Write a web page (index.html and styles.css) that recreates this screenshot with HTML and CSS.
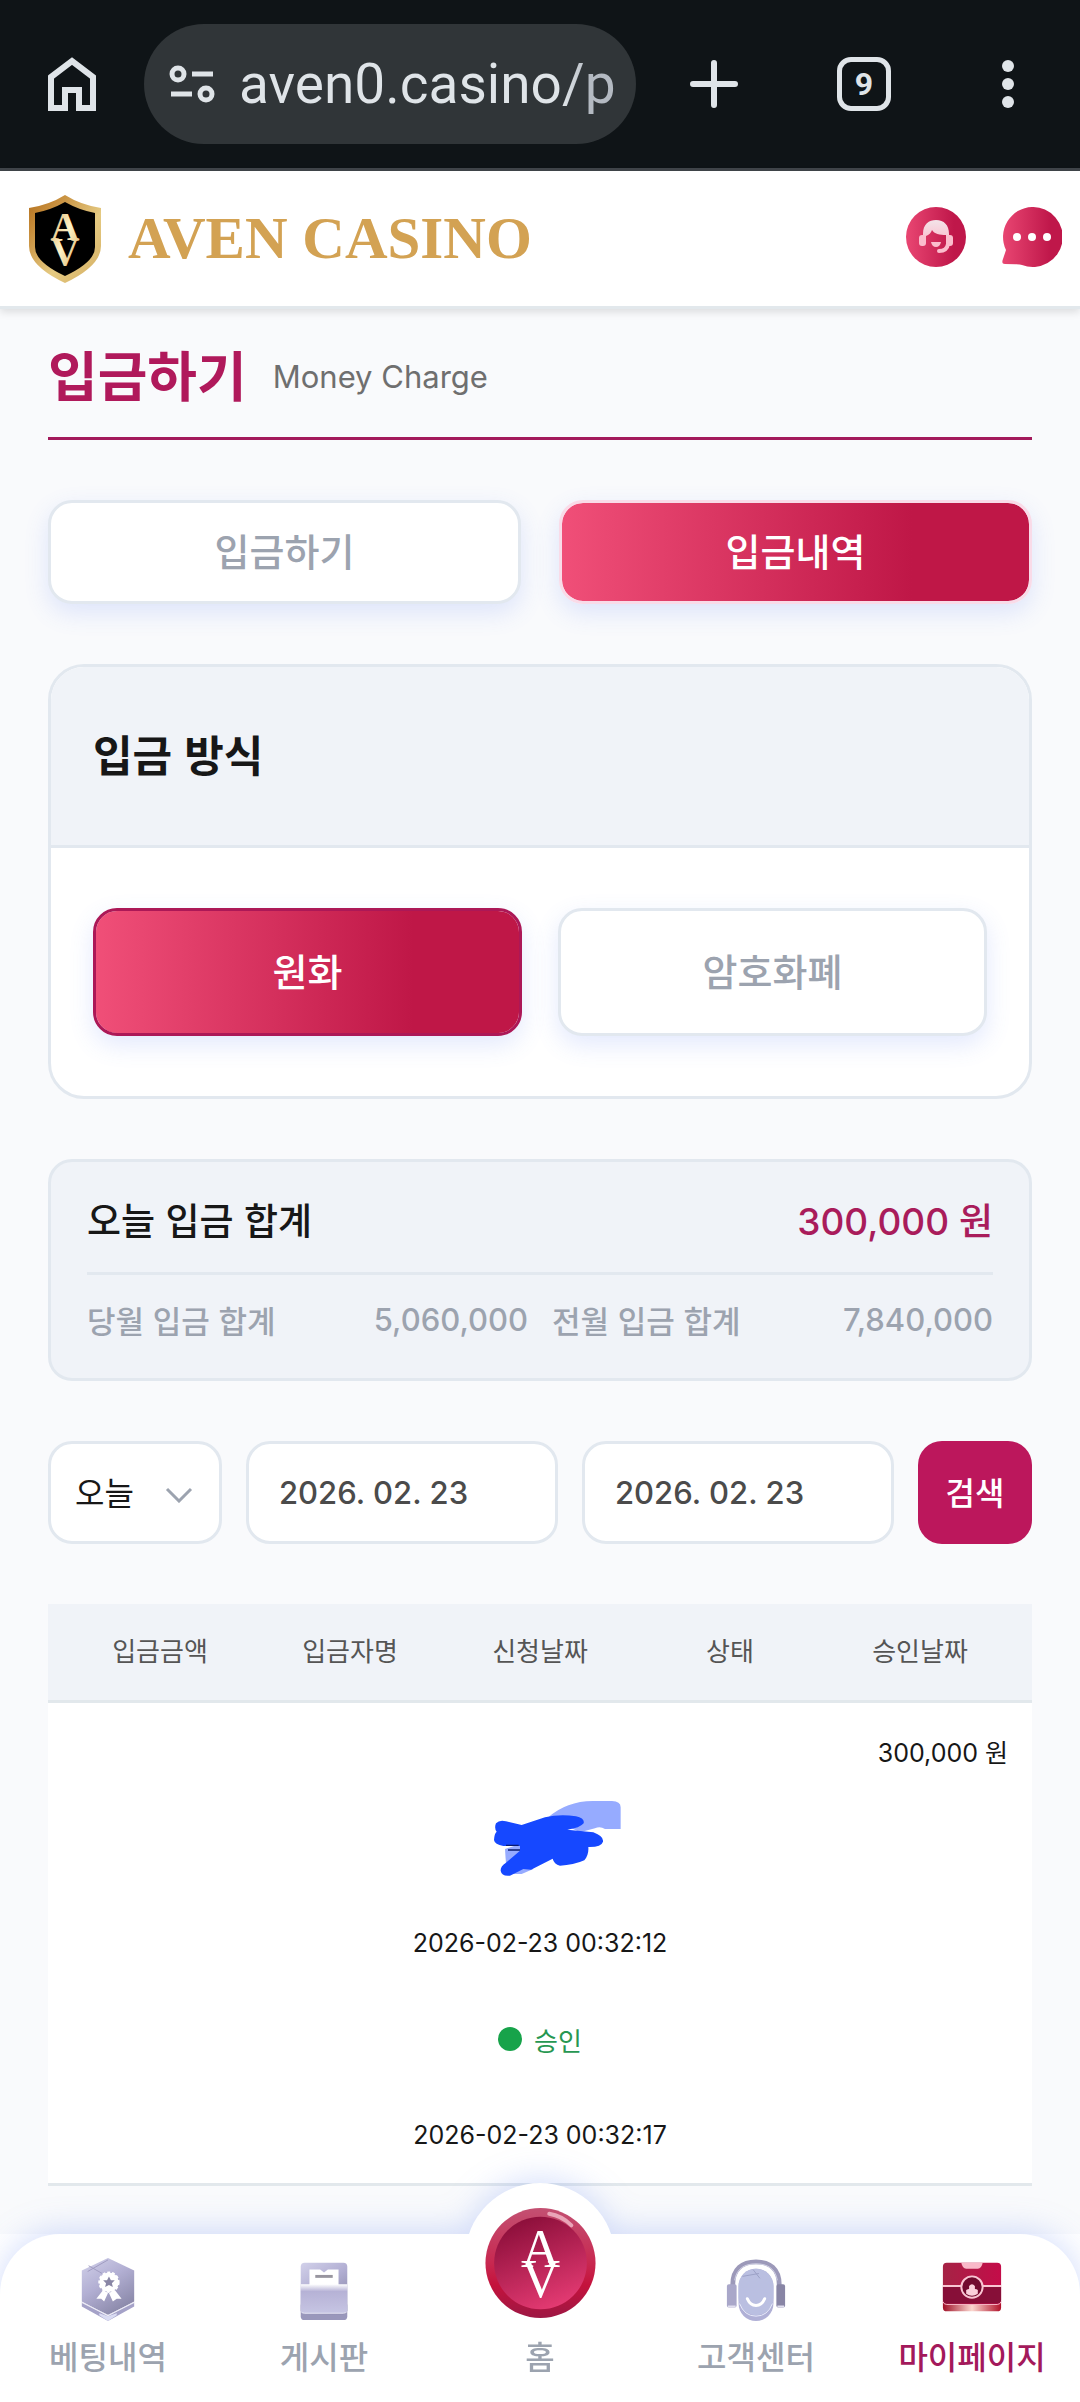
FILE: index.html
```html
<!DOCTYPE html>
<html lang="ko">

<head>
  <meta charset="UTF-8">
  <meta name="viewport" content="width=device-width, initial-scale=1.0">
  <title>AVEN CASINO</title>
  <link rel="stylesheet" href="styles.css">
</head>

<body>

  <!-- Browser bar -->
  <div class="browser">
    <button class="browser-btn" type="button" aria-label="Home">
      <svg width="48" height="54" viewBox="0 0 48 54">
        <path d="M3 20 L24 4 L45 20 V51 H31 V33 H17 V51 H3 Z" fill="none" stroke="#dfe4e8" stroke-width="6" />
      </svg>
    </button>
    <div class="address">
      <svg width="46" height="40" viewBox="0 0 46 40" fill="none" stroke="#dfe4e8" stroke-width="5">
        <circle cx="9" cy="10" r="6" />
        <path d="M23 10 H44 M2 30 H23" />
        <circle cx="37" cy="30" r="6" />
      </svg>
      <input class="address-input" type="text" value="aven0.casino/p" aria-label="URL">
    </div>
    <button class="browser-btn browser-plus" type="button" aria-label="New tab">
      <svg width="48" height="48" viewBox="0 0 48 48">
        <path d="M24 3 V45 M3 24 H45" stroke="#dfe4e8" stroke-width="6" stroke-linecap="round" />
      </svg>
    </button>
    <button class="browser-btn browser-tabs" type="button">9</button>
    <button class="browser-btn browser-menu" type="button" aria-label="Menu">
      <svg width="12" height="48" viewBox="0 0 12 48" fill="#dfe4e8">
        <circle cx="6" cy="6" r="6" />
        <circle cx="6" cy="24" r="6" />
        <circle cx="6" cy="42" r="6" />
      </svg>
    </button>
  </div>

  <!-- Site header -->
  <header class="header">
    <a class="logo" href="#">
      <svg width="74" height="88" viewBox="0 0 74 88">
        <defs>
          <linearGradient id="gold" x1="0" y1="0" x2="1" y2="1">
            <stop offset="0" stop-color="#b26f1d" />
            <stop offset="0.2" stop-color="#c58a38" />
            <stop offset="0.6" stop-color="#e5ca82" />
            <stop offset="1" stop-color="#d4ad60" />
          </linearGradient>
          <linearGradient id="letters" x1="0" y1="0" x2="1" y2="1">
            <stop offset="0" stop-color="#d9a65a" />
            <stop offset="0.5" stop-color="#fdf3c8" />
            <stop offset="1" stop-color="#d2a050" />
          </linearGradient>
        </defs>
        <path d="M37 0 Q53 10 73 13 V51 Q73 71 37 88 Q1 71 1 51 V13 Q21 10 37 0 Z" fill="url(#gold)" />
        <path d="M37 7 Q51 15 67 18 V52 Q67 67 37 81 Q7 67 7 52 V18 Q23 15 37 7 Z" fill="#000" />
        <text class="monogram" font-size="40" fill="url(#letters)"><tspan x="37" y="45">A</tspan><tspan x="37" y="70">V</tspan></text>
      </svg>
      <span>AVEN CASINO</span>
    </a>
    <button class="header-btn" type="button" aria-label="고객센터">
      <svg width="60" height="60" viewBox="0 0 60 60">
        <defs>
          <linearGradient id="rose" x1="0" y1="0" x2="1" y2="0">
            <stop offset="0" stop-color="#e94672" />
            <stop offset="0.8" stop-color="#bf174a" />
          </linearGradient>
          <linearGradient id="hair" x1="0" y1="0" x2="0" y2="1">
            <stop offset="0" stop-color="#f3e4e9" />
            <stop offset="1" stop-color="#fbbdcd" />
          </linearGradient>
        </defs>
        <circle cx="30" cy="30" r="30" fill="url(#rose)" />
        <path d="M17 31 V27 C17 17 23 13 30 13 C38 13 43 18 43 27 V31 H40 V28 C34 28 28 27 26 23 C25 26 23 28 20 29 V34 H17 Z" fill="url(#hair)" />
        <rect x="13" y="28" width="7" height="11" rx="3" fill="#fbbdcd" />
        <rect x="40" y="28" width="7" height="11" rx="3" fill="#fbbdcd" />
        <path d="M25 35 H35 Q34 40 30 40 Q26 40 25 35 Z" fill="#fbbdcd" />
        <path d="M42 37 Q41 44 33 44" fill="none" stroke="#fbbdcd" stroke-width="4" stroke-linecap="round" />
      </svg>
    </button>
    <button class="header-btn" type="button" aria-label="채팅">
      <svg width="60" height="60" viewBox="0 0 60 60">
        <path d="M30 0 A30 30 0 1 1 20 58 Q17 57 3 57 Q-1 57 1 52 L4 43 A30 30 0 0 1 30 0 Z" fill="url(#rose)" />
        <g fill="#fff">
          <circle cx="15" cy="30" r="4" />
          <circle cx="30" cy="30" r="4" />
          <circle cx="45" cy="30" r="4" />
        </g>
      </svg>
    </button>
  </header>

  <main class="main">
    <div class="title">
      <h1>입금하기</h1>
      <span>Money Charge</span>
    </div>

    <div class="tabs">
      <button class="choice" type="button">입금하기</button>
      <button class="choice active" type="button">입금내역</button>
    </div>

    <section class="card">
      <h2 class="card-head">입금 방식</h2>
      <div class="card-body">
        <button class="choice active outlined" type="button">원화</button>
        <button class="choice" type="button">암호화폐</button>
      </div>
    </section>

    <section class="summary">
      <div class="summary-today">
        <span>오늘 입금 합계</span>
        <strong>300,000 원</strong>
      </div>
      <div class="summary-months">
        <div class="summary-month"><span>당월 입금 합계</span><span class="number">5,060,000</span></div>
        <div class="summary-month"><span>전월 입금 합계</span><span class="number">7,840,000</span></div>
      </div>
    </section>

    <form class="filter">
      <div class="period">
        <select aria-label="기간">
          <option>오늘</option>
        </select>
        <svg class="chevron" width="28" height="16" viewBox="0 0 28 16">
          <path d="M2 2 L14 14 L26 2" fill="none" stroke="#9ca3af" stroke-width="3" />
        </svg>
      </div>
      <input class="date" type="text" value="2026. 02. 23" aria-label="시작 날짜">
      <input class="date" type="text" value="2026. 02. 23" aria-label="종료 날짜">
      <button class="search" type="button">검색</button>
    </form>

    <table class="history">
      <thead>
        <tr>
          <th>입금금액</th>
          <th>입금자명</th>
          <th>신청날짜</th>
          <th>상태</th>
          <th>승인날짜</th>
        </tr>
      </thead>
      <tbody>
        <tr>
          <td class="amount">300,000 원</td>
          <td>
            <!-- Name scribbled out -->
            <svg width="162" height="92" viewBox="0 0 162 92" aria-hidden="true">
              <g transform="translate(11 -22) scale(0.3333)">
                <path d="M235 115 Q290 66 370 66 H425 Q452 66 452 85 V150 H405 Q390 140 375 148 L330 160 Z" fill="#96abff" />
                <path d="M105 210 L150 195 L190 270 L155 285 H110 Z" fill="#96abff" />
                <path d="M78 133 Q88 122 108 127 L155 138 L225 115 Q270 104 318 112 Q345 118 341 133 Q330 147 292 152 L370 160 Q402 172 399 188 Q394 205 355 204 Q357 227 343 244 Q310 259 270 260 Q252 255 248 239 L183 272 L160 270 L120 290 Q95 293 92 275 Q91 262 108 251 L150 215 V201 H100 Q74 197 72 183 Q73 164 80 158 Q72 147 78 133 Z" fill="#1648ff" />
                <path d="M108 199 H146 M114 213 H150" stroke="#0a1b6e" stroke-width="4" />
              </g>
            </svg>
          </td>
          <td>2026-02-23 00:32:12</td>
          <td class="approved">승인</td>
          <td>2026-02-23 00:32:17</td>
        </tr>
      </tbody>
    </table>
  </main>

  <!-- Bottom menu -->
  <nav class="menu">
    <a class="menu-item" href="#">
      <svg width="54" height="64" viewBox="0 0 54 66">
        <defs>
          <linearGradient id="lilac" x1="0" y1="0" x2="0.6" y2="1">
            <stop offset="0" stop-color="#d2d1ea" />
            <stop offset="0.5" stop-color="#b2afd3" />
            <stop offset="1" stop-color="#8b89aa" />
          </linearGradient>
          <linearGradient id="pocket" x1="0" y1="0" x2="0" y2="1">
            <stop offset="0" stop-color="#fff" />
            <stop offset="0.25" stop-color="#b6b2d6" />
            <stop offset="1" stop-color="#c6c5e3" />
          </linearGradient>
        </defs>
        <path d="M0 47 L27 61 L54 47 V51 L27 66 L0 51 Z" fill="#a5a2c8" />
        <path d="M18 58 L27 61 L36 58 V60 L27 66 L18 60 Z" fill="#dadcf3" />
        <path d="M27 1 L54 14 V46 L27 60 L0 46 V14 Z" fill="url(#lilac)" />
        <path d="M0 47 L27 60 L54 47" fill="none" stroke="#e5e4f3" stroke-width="1" />
        <path d="M6 15 L27 3 M7 9 L21 17" stroke="#9f9bc0" stroke-width="1" />
        <path d="M22 34 L27 37 L23 46 L20 43 L15 43 Z M34 34 L28 37 L32 46 L36 43 L41 43 Z" fill="#fff" />
        <circle cx="28" cy="26" r="10" fill="#fff" stroke="#fff" stroke-width="2" stroke-dasharray="3 2" />
        <path d="M28 20 L30 24 L34 24 L31 27 L32 31 L28 29 L24 31 L25 27 L22 24 L26 24 Z" fill="#8986a5" />
      </svg>
      <span>베팅내역</span>
    </a>
    <a class="menu-item" href="#">
      <svg width="48" height="64" viewBox="0 0 48 66">
        <rect x="0" y="46" width="48" height="19" rx="4" fill="#9997bb" />
        <rect x="0" y="6" width="48" height="53" rx="4" fill="url(#lilac)" />
        <path d="M9 13 H20 L24 16 L28 13 H39 V30 H9 Z" fill="#fff" />
        <path d="M15 20 H33" stroke="#98959f" stroke-width="3" />
        <path d="M0 28 H48 V54 Q48 58 44 58 H4 Q0 58 0 54 Z" fill="url(#pocket)" />
        <path d="M0 56 Q1 58 4 58 H44 Q47 58 48 56" fill="none" stroke="#e7e6f6" stroke-width="1" />
      </svg>
      <span>게시판</span>
    </a>
    <a class="menu-item" href="#">
      <span class="coin">
        <svg width="111" height="112" viewBox="0 0 114 116">
          <defs>
            <linearGradient id="rim" x1="0" y1="0" x2="0" y2="1">
              <stop offset="0" stop-color="#c35072" />
              <stop offset="0.5" stop-color="#c82850" />
              <stop offset="0.7" stop-color="#c4123c" />
              <stop offset="1" stop-color="#9d1744" />
            </linearGradient>
            <linearGradient id="face" x1="0.2" y1="0" x2="0.6" y2="1">
              <stop offset="0" stop-color="#870c37" />
              <stop offset="1" stop-color="#e33a72" />
            </linearGradient>
          </defs>
          <circle cx="57" cy="58" r="57" fill="url(#rim)" />
          <circle cx="57" cy="58" r="48" fill="url(#face)" />
          <path d="M66 7 Q79 9 89 19" fill="none" stroke="#eaa5b8" stroke-width="4" stroke-linecap="round" />
          <text class="monogram" font-size="56" fill="#fff"><tspan x="57" y="62">A</tspan><tspan x="57" y="93">V</tspan></text>
        </svg>
      </span>
      <span>홈</span>
    </a>
    <a class="menu-item" href="#">
      <svg width="60" height="64" viewBox="0 0 60 66">
        <path d="M6 29 C6 12 16 5 30 5 C44 5 54 12 54 29" fill="none" stroke="#9c99b9" stroke-width="5" />
        <path d="M8 24 C10 12 18 7 30 7 C42 7 50 12 52 24" fill="none" stroke="#d3d3e6" stroke-width="1" />
        <rect x="12" y="12" width="36" height="54" rx="18" fill="#b0b0d6" />
        <rect x="12" y="12" width="36" height="48" rx="18" fill="#babfe1" />
        <path d="M13 48 Q18 61 30 61 Q42 61 47 48" fill="none" stroke="#e7eafa" stroke-width="1" />
        <path d="M16 20 L33 17 M27 13 L34 22" stroke="#9ba0c5" stroke-width="1" />
        <path d="M21 43 Q24 50 30 50 Q36 50 39 43" fill="none" stroke="#fff" stroke-width="3" stroke-linecap="round" />
        <rect x="0" y="28" width="10" height="24" rx="2" fill="#a9a7c9" />
        <rect x="51" y="28" width="9" height="24" rx="2" fill="#8885a5" />
        <path d="M1 51 H9 M52 51 H59" stroke="#e1e0ef" stroke-width="2" />
      </svg>
      <span>고객센터</span>
    </a>
    <a class="menu-item current" href="#">
      <svg width="62" height="64" viewBox="0 0 62 66">
        <defs>
          <linearGradient id="chest" x1="0" y1="0" x2="1" y2="0">
            <stop offset="0" stop-color="#a52345" />
            <stop offset="1" stop-color="#c40c49" />
          </linearGradient>
          <linearGradient id="base" x1="0" y1="0" x2="1" y2="0">
            <stop offset="0" stop-color="#a00f27" />
            <stop offset="0.5" stop-color="#fbd8d0" />
            <stop offset="1" stop-color="#b01029" />
          </linearGradient>
        </defs>
        <rect x="1" y="42" width="60" height="14" rx="4" fill="url(#base)" />
        <rect x="1" y="6" width="60" height="43" rx="4" fill="url(#chest)" />
        <path d="M1 31 H61 V44 Q61 48 57 48 H5 Q1 48 1 44 Z" fill="#870f38" />
        <path d="M1 46 Q2 49 5 49 H57 Q60 49 61 46" fill="none" stroke="#f7b5c4" stroke-width="1" />
        <path d="M20 6 H42 Q41 12 37 12 H25 Q21 12 20 6 Z" fill="#f9b9c9" />
        <path d="M1 30 H61" stroke="#f9c5d2" stroke-width="2" />
        <circle cx="31" cy="31" r="11" fill="#720a2e" stroke="#f9c5d2" stroke-width="2" />
        <path d="M25 38 V34 Q27 33 28 33 V30 Q31 26 34 30 V33 Q36 33 37 34 V38 Q31 42 25 38 Z" fill="#fbd0db" />
      </svg>
      <span>마이페이지</span>
    </a>
  </nav>

</body>

</html>
```
FILE: styles.css
```css
* {
  box-sizing: border-box;
}

body {
  margin: 0;
  background: #fff;
  color: #171717;
  font-family: "Noto Sans CJK KR", sans-serif;
  font-size: 32px;
}

button,
input,
select {
  margin: 0;
  padding: 0;
  border: 0;
  background: none;
  color: inherit;
  font: inherit;
}

a {
  color: inherit;
  text-decoration: none;
}

svg {
  display: block;
  flex-shrink: 0;
}

.monogram {
  font-family: "Liberation Serif", serif;
  text-anchor: middle;
}

/* Browser bar */
.browser {
  display: flex;
  align-items: center;
  padding: 24px 66px 24px 48px;
  background: #0f1417;
  border-bottom: 3px solid #40454a;
}

.browser-btn {
  flex-shrink: 0;
}

.address {
  flex: 1;
  min-width: 0;
  display: flex;
  align-items: center;
  gap: 24px;
  height: 120px;
  margin: 0 54px 0 48px;
  padding: 0 16px 0 25px;
  border-radius: 60px;
  background: #303538;
}

.address-input {
  flex: 1;
  min-width: 0;
  height: 80px;
  font-family: Roboto, sans-serif;
  font-size: 55px;
  color: transparent;
  background: linear-gradient(to right, #dfe4e8 85%, #b4bac2 92%);
  -webkit-background-clip: text;
  background-clip: text;
}

.browser-tabs {
  width: 54px;
  height: 54px;
  margin-left: 99px;
  border: 5px solid #dfe4e8;
  border-radius: 14px;
  color: #dfe4e8;
  font-family: Roboto, sans-serif;
  font-size: 32px;
  font-weight: bold;
  line-height: 44px;
}

.browser-menu {
  margin-left: 111px;
}

/* Site header */
.header {
  position: relative;
  display: flex;
  align-items: center;
  gap: 36px;
  height: 138px;
  padding: 0 18px 0 28px;
  background: #fff;
  border-bottom: 3px solid #e2e8ec;
  box-shadow: 0 3px 8px rgba(0, 0, 0, 0.12);
}

.header-btn {
  padding-bottom: 3px;
}

.logo {
  display: flex;
  align-items: center;
  gap: 26px;
  margin-right: auto;
  color: #d3a253;
  font-family: "Liberation Serif", serif;
  font-size: 59px;
  font-weight: bold;
}

/* Content */
.main {
  display: flex;
  flex-direction: column;
  gap: 60px;
  padding: 29px 48px 48px;
  background: #f9fafc;
}

.title {
  display: flex;
  align-items: center;
  gap: 26px;
  padding-bottom: 27px;
  border-bottom: 3px solid #a3195b;
  color: #6f6f6f;
  font-family: Inter, sans-serif;
  font-size: 31px;
}

.title h1 {
  margin: 0;
  color: #b0195b;
  font-family: "Noto Sans CJK KR", sans-serif;
  font-size: 54px;
  line-height: 72px;
}

.title span {
  padding-top: 4px;
}

.tabs {
  display: grid;
  grid-template-columns: 1fr 1fr;
  gap: 38px;
}

.choice {
  height: 104px;
  padding-bottom: 6px;
  border: 3px solid #e2e8ef;
  border-radius: 24px;
  background: #fff;
  color: #9ca3af;
  font-size: 38px;
  font-weight: 500;
  box-shadow: 0 9px 24px rgba(80, 120, 240, 0.16);
}

.choice.active {
  border-color: #f9dbe8;
  background: linear-gradient(to right, #f04f78, #bf1747 75%) padding-box;
  color: #fff;
}

.choice.outlined {
  border-color: #ac1857;
}

.card {
  border: 3px solid #e2e8ef;
  border-radius: 36px;
  background: #fff;
  overflow: hidden;
}

.card-head {
  margin: 0;
  padding: 54px 42px 60px;
  background: #f0f3f8;
  border-bottom: 3px solid #e2e8ef;
  font-size: 43px;
  line-height: 64px;
}

.card-body {
  display: grid;
  grid-template-columns: 1fr 1fr;
  gap: 36px;
  padding: 60px 42px;
}

.card-body .choice {
  height: 128px;
}

.summary {
  padding: 27px 36px 24px;
  border: 3px solid #e2e8ef;
  border-radius: 24px;
  background: #f0f3f8;
}

.summary-today,
.summary-month {
  display: flex;
  align-items: center;
  justify-content: space-between;
}

.summary-today {
  height: 86px;
  padding-bottom: 23px;
  border-bottom: 3px solid #e2e8ef;
  font-size: 37px;
  font-weight: 500;
}

.summary-today strong {
  color: #a91c5b;
  font-family: Inter, "Noto Sans CJK KR", sans-serif;
  font-weight: 500;
}

.summary-months {
  display: grid;
  grid-template-columns: 1fr 1fr;
  gap: 24px;
  padding-top: 12px;
  color: #9ca3af;
  font-size: 31px;
  font-weight: 500;
}

.summary-month {
  height: 67px;
  padding-bottom: 3px;
}

.number {
  font-family: Inter, sans-serif;
}

.filter {
  display: flex;
  gap: 24px;
  height: 103px;
}

.period,
.date {
  border: 3px solid #e2e8ef;
  border-radius: 24px;
  background: #fff;
}

.period {
  position: relative;
  width: 174px;
}

.period select {
  width: 100%;
  height: 100%;
  padding: 0 0 4px 24px;
  appearance: none;
}

.chevron {
  position: absolute;
  top: 43px;
  right: 26px;
  pointer-events: none;
}

.date {
  flex: 1;
  min-width: 0;
  padding: 0 30px;
  color: #4b4b4b;
  font-family: Inter, sans-serif;
  font-size: 31px;
  font-weight: 500;
}

.search {
  width: 114px;
  padding-bottom: 4px;
  border-radius: 24px;
  background: #bc175c;
  color: #fff;
  font-weight: 500;
}

.history,
.history thead,
.history tbody {
  display: block;
}

.history tr {
  border-bottom: 3px solid #e2e8ec;
}

.history thead tr {
  display: grid;
  grid-template-columns: repeat(5, 1fr);
  padding: 0 17px;
  background: #f0f3f8;
}

.history th {
  padding: 0 0 4px;
  color: #555;
  font-size: 26px;
  font-weight: 400;
  line-height: 92px;
}

.history tbody tr {
  display: block;
  background: #fff;
}

.history td {
  display: flex;
  align-items: center;
  justify-content: center;
  height: 96px;
  padding: 0 24px;
  font-family: Inter, "Noto Sans CJK KR", sans-serif;
  font-size: 25px;
}

.history .amount {
  justify-content: flex-end;
}

.history .approved {
  gap: 12px;
  color: #279752;
  font-family: "Noto Sans CJK KR", sans-serif;
  font-size: 26px;
}

.approved::before {
  content: "";
  width: 24px;
  height: 24px;
  border-radius: 50%;
  background: #17a34a;
}

/* Bottom menu */
.menu {
  position: relative;
  display: grid;
  grid-template-columns: repeat(5, 1fr);
  height: 168px;
  border-radius: 60px 60px 0 0;
  background: #fff;
  color: #9ca3af;
  filter: drop-shadow(0 -3px 16px rgba(80, 120, 240, 0.25));
}

.menu-item {
  position: relative;
  display: flex;
  flex-direction: column;
  align-items: center;
  justify-content: flex-end;
  gap: 14px;
  padding-bottom: 27px;
  font-weight: 500;
  line-height: 40px;
}

.menu-item.current {
  color: #a3195b;
}

.coin {
  position: absolute;
  top: -51px;
  left: 50%;
  display: flex;
  justify-content: center;
  width: 150px;
  height: 150px;
  margin-left: -75px;
  padding-top: 24px;
  border-radius: 50%;
  background: #fff;
}
```
